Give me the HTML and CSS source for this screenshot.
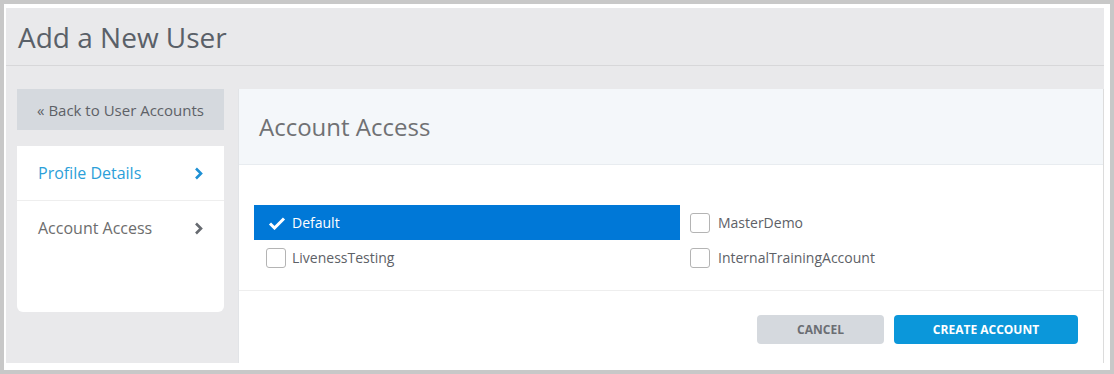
FILE: index.html
```html
<!DOCTYPE html>
<html lang="en">
<head>
  <meta charset="UTF-8">
  <title>Add a New User</title>
  <link rel="stylesheet" href="styles.css">
</head>
<body>

  <div class="frame">
    <div class="app">

      <div class="page-header">
        <h1>Add a New User</h1>
      </div>

      <div class="page-body">

        <div class="sidebar">
          <button class="back-btn">« Back to User Accounts</button>
          <div class="steps">
            <div class="step active">
              <span>Profile Details</span>
              <svg class="chevron" width="9" height="13" viewBox="0 0 9 13"><path d="M2 1.5 L7 6.5 L2 11.5" fill="none" stroke="currentColor" stroke-width="2.6"/></svg>
            </div>
            <div class="step">
              <span>Account Access</span>
              <svg class="chevron" width="9" height="13" viewBox="0 0 9 13"><path d="M2 1.5 L7 6.5 L2 11.5" fill="none" stroke="currentColor" stroke-width="2.6"/></svg>
            </div>
          </div>
        </div>

        <div class="panel">
          <div class="panel-header">
            <h2>Account Access</h2>
          </div>

          <div class="accounts">
            <label class="account selected">
              <svg class="check" width="18" height="14" viewBox="0 0 18 14"><path d="M2 7.5 L6.5 12 L16 2.5" fill="none" stroke="#fff" stroke-width="3"/></svg>
              <span>Default</span>
            </label>
            <label class="account">
              <span class="box"></span>
              <span>MasterDemo</span>
            </label>
            <label class="account">
              <span class="box"></span>
              <span>LivenessTesting</span>
            </label>
            <label class="account">
              <span class="box"></span>
              <span>InternalTrainingAccount</span>
            </label>
          </div>

          <div class="panel-footer">
            <button class="btn btn-cancel">Cancel</button>
            <button class="btn btn-create">Create Account</button>
          </div>
        </div>

      </div>
    </div>
  </div>

</body>
</html>
```

FILE: styles.css
```css
body {
  margin: 0;
  padding: 4px;
  background-color: #c8c8c8;
  font-family: 'Open Sans', sans-serif;
  color: #5d6167;
}

.frame {
  width: 1098px;
  height: 355px;
  padding: 4px 6px 7px 2px;
  background-color: #ffffff;
}

.app {
  height: 100%;
  background-color: #e9e9eb;
  display: flex;
  flex-direction: column;
}

.page-header {
  height: 57px;
  border-bottom: 1px solid #d7d7d9;
  display: flex;
  align-items: center;
  padding-left: 12px;
}

.page-header h1 {
  margin: 0;
  font-size: 28px;
  font-weight: normal;
  color: #5a6068;
}

.page-body {
  flex: 1;
  display: flex;
  gap: 14px;
  padding: 23px 0 0 11px;
}

/* colonna di sinistra */
.sidebar {
  width: 207px;
  display: flex;
  flex-direction: column;
  gap: 16px;
}

.back-btn {
  height: 41px;
  border: none;
  background-color: #d5d9de;
  font-family: inherit;
  font-size: 15px;
  color: #5d6167;
  padding: 0;
}

.steps {
  height: 166px;
  background-color: #ffffff;
  border-radius: 0 0 6px 6px;
}

.step {
  height: 54px;
  display: flex;
  align-items: center;
  justify-content: space-between;
  padding: 0 21px 0 21px;
  font-size: 16px;
  color: #6d6d6d;
  border-bottom: 1px solid #eeeeee;
}

.step + .step {
  border-bottom: none;
}

.step.active {
  color: #2c9fd9;
}

.step .chevron {
  color: #666a70;
}

.step.active .chevron {
  color: #1e90d4;
}

/* pannello principale */
.panel {
  flex: 1;
  background-color: #ffffff;
  border-left: 1px solid #e2e4e7;
  border-right: 1px solid #dcdcdc;
  display: flex;
  flex-direction: column;
}

.panel-header {
  height: 75px;
  background-color: #f4f7fa;
  border-bottom: 1px solid #e8ecf0;
  display: flex;
  align-items: center;
  padding-left: 20px;
}

.panel-header h2 {
  margin: 0;
  font-size: 24px;
  font-weight: normal;
  color: #707174;
}

.accounts {
  display: grid;
  grid-template-columns: 426px 1fr;
  grid-auto-rows: 35px;
  padding: 40px 0 15px 15px;
  border-bottom: 1px solid #eeeeee;
}

.account {
  display: flex;
  align-items: center;
  gap: 6px;
  padding-left: 12px;
  font-size: 14px;
  color: #5d6167;
}

.account:nth-child(even) {
  padding-left: 10px;
  gap: 8px;
}

.account.selected {
  background-color: #0078d7;
  color: #ffffff;
  padding-left: 14px;
  gap: 6px;
}

.box {
  width: 18px;
  height: 18px;
  border: 1px solid #b4b4b4;
  border-radius: 3px;
}

.panel-footer {
  display: flex;
  justify-content: flex-end;
  gap: 10px;
  padding: 24px 25px 0 0;
}

.btn {
  height: 29px;
  border: none;
  border-radius: 4px;
  font-family: inherit;
  font-size: 12px;
  font-weight: bold;
  text-transform: uppercase;
  cursor: pointer;
}

.btn-cancel {
  width: 127px;
  background-color: #d5d9de;
  color: #6b6e73;
}

.btn-create {
  width: 184px;
  background-color: #0b97da;
  color: #ffffff;
}
```
